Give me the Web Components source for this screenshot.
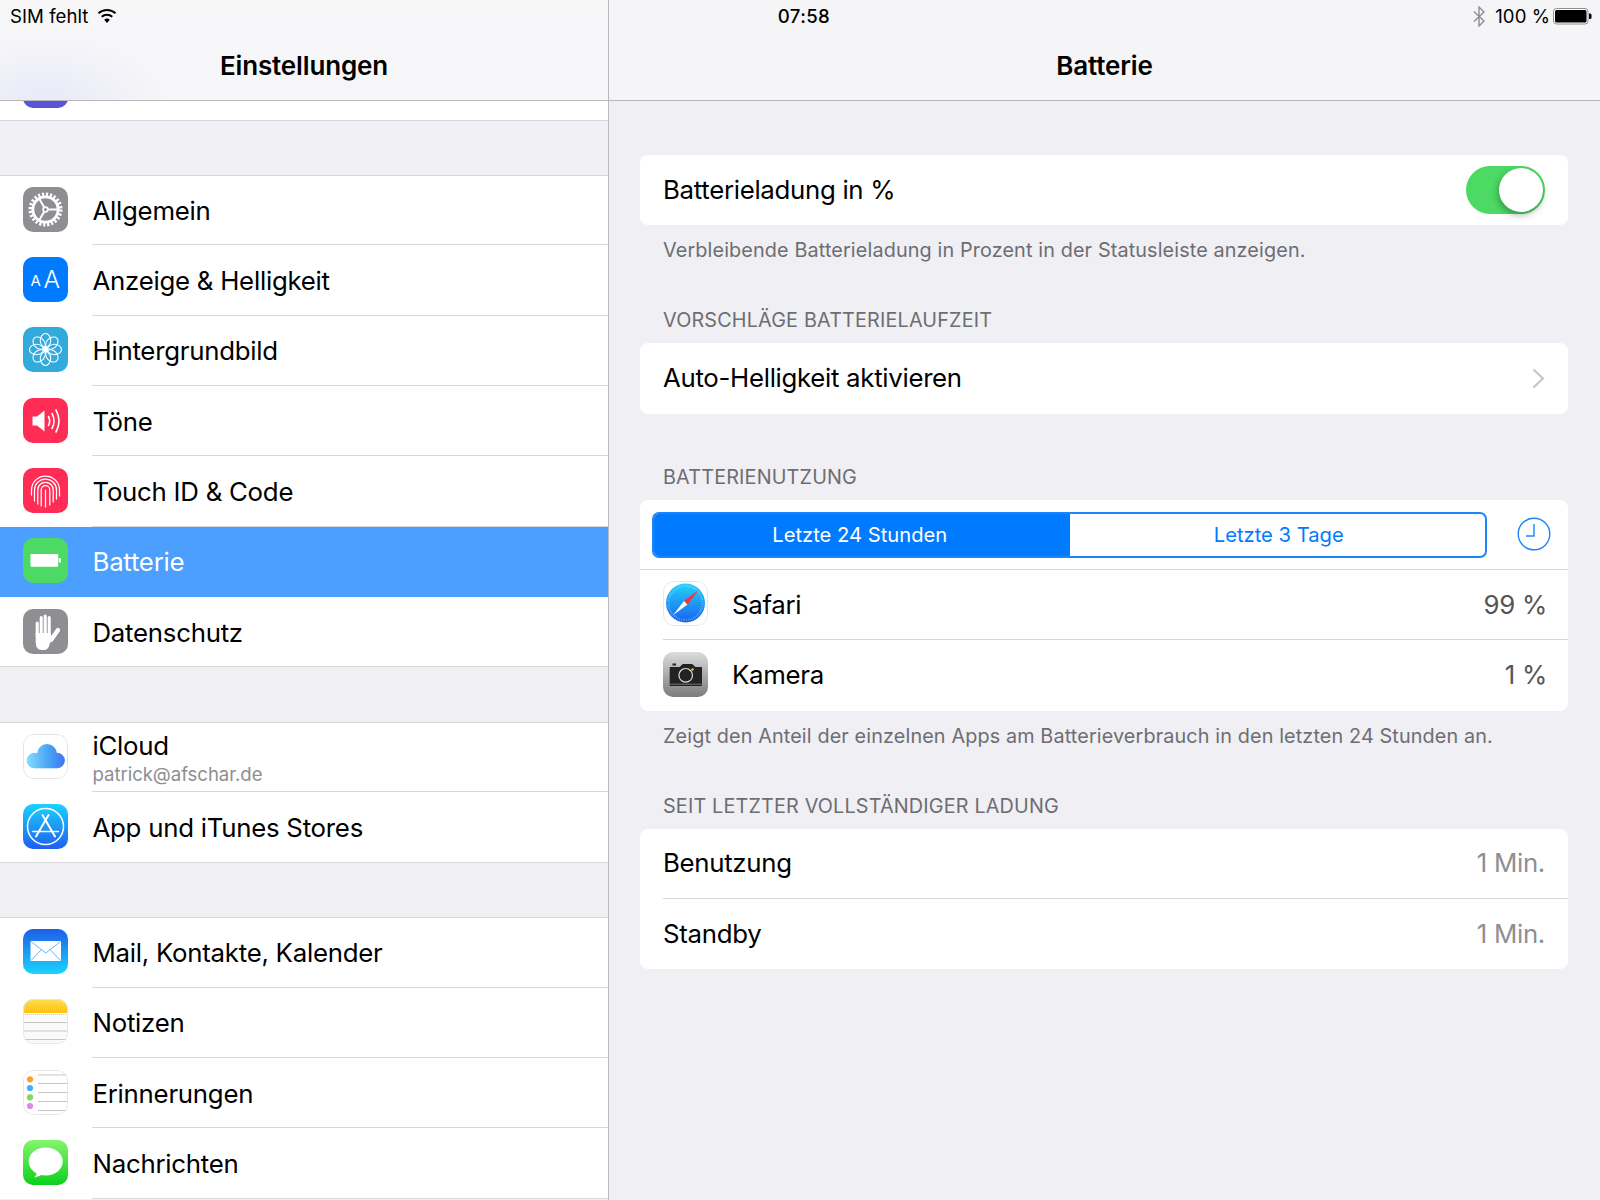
<!doctype html>
<html lang="de">
<head>
<meta charset="utf-8">
<title>Einstellungen</title>
<style>
	html, body { margin: 0; background: #efeff4; }
	body { font-family: Inter, "Liberation Sans", sans-serif; }
	[slot="value"] { white-space: nowrap; }
</style>
</head>
<body>
<settings-app>
	<status-bar></status-bar>

	<split-pane slot="master">
		<nav-bar slot="nav" title="Einstellungen" tint></nav-bar>
		<settings-list>
			<settings-group clipped>
				<settings-row last><app-icon slot="icon" name="moon"></app-icon></settings-row>
			</settings-group>
			<settings-group>
				<settings-row label="Allgemein"><app-icon slot="icon" name="gear"></app-icon></settings-row>
				<settings-row label="Anzeige &amp; Helligkeit"><app-icon slot="icon" name="display"></app-icon></settings-row>
				<settings-row label="Hintergrundbild"><app-icon slot="icon" name="flower"></app-icon></settings-row>
				<settings-row label="Töne"><app-icon slot="icon" name="sound"></app-icon></settings-row>
				<settings-row label="Touch ID &amp; Code"><app-icon slot="icon" name="touch"></app-icon></settings-row>
				<settings-row label="Batterie" selected><app-icon slot="icon" name="battery"></app-icon></settings-row>
				<settings-row label="Datenschutz" last><app-icon slot="icon" name="hand"></app-icon></settings-row>
			</settings-group>
			<settings-group>
				<settings-row label="iCloud" sub="patrick@afschar.de"><app-icon slot="icon" name="icloud"></app-icon></settings-row>
				<settings-row label="App und iTunes Stores" last><app-icon slot="icon" name="appstore"></app-icon></settings-row>
			</settings-group>
			<settings-group>
				<settings-row label="Mail, Kontakte, Kalender"><app-icon slot="icon" name="mail"></app-icon></settings-row>
				<settings-row label="Notizen"><app-icon slot="icon" name="notes"></app-icon></settings-row>
				<settings-row label="Erinnerungen"><app-icon slot="icon" name="reminders"></app-icon></settings-row>
				<settings-row label="Nachrichten"><app-icon slot="icon" name="messages"></app-icon></settings-row>
			</settings-group>
		</settings-list>
	</split-pane>

	<split-pane slot="detail">
		<nav-bar slot="nav" title="Batterie"></nav-bar>
		<detail-body>
			<table-section footer="Verbleibende Batterieladung in Prozent in der Statusleiste anzeigen.">
				<table-cell label="Batterieladung in %" last><ios-switch slot="value"></ios-switch></table-cell>
			</table-section>
			<table-section header="VORSCHLÄGE BATTERIELAUFZEIT">
				<table-cell label="Auto-Helligkeit aktivieren" chevron last></table-cell>
			</table-section>
			<table-section style="margin-top:52px" header="BATTERIENUTZUNG" footer="Zeigt den Anteil der einzelnen Apps am Batterieverbrauch in den letzten 24 Stunden an.">
				<usage-filter></usage-filter>
				<table-cell label="Safari" tone="dark">
					<app-icon slot="icon" name="safari"></app-icon>
					<span slot="value">99 %</span>
				</table-cell>
				<table-cell label="Kamera" tone="dark" last>
					<app-icon slot="icon" name="camera"></app-icon>
					<span slot="value">1 %</span>
				</table-cell>
			</table-section>
			<table-section header="SEIT LETZTER VOLLSTÄNDIGER LADUNG">
				<table-cell label="Benutzung"><span slot="value">1 Min.</span></table-cell>
				<table-cell label="Standby" last><span slot="value">1 Min.</span></table-cell>
			</table-section>
		</detail-body>
	</split-pane>
</settings-app>

<script>
// Shared line colours
const LINE = "#d8d8dc";
const EDGE = "#b9b9bc";

// Icon artwork, all on a 45x45 box
const ICONS = {
	moon: `<rect width="45" height="45" fill="#5856d6"/>`,
	gear: `<rect width="45" height="45" fill="#8e8e93"/>
		<g fill="none" stroke="#fff">
			<circle cx="22.5" cy="22.5" r="15.2" stroke-width="3.6" stroke-dasharray="2.2 1.78"/>
			<circle cx="22.5" cy="22.5" r="12.6" stroke-width="2.8"/>
			<path d="M22.5 22.5H35M22.5 22.5L16.2 11.7M22.5 22.5L16.2 33.3" stroke-width="2"/>
			<circle cx="22.5" cy="22.5" r="2.4" fill="#8e8e93" stroke-width="1.6"/>
		</g>`,
	display: `<rect width="45" height="45" fill="#007aff"/>
		<text x="7.5" y="29" font-family="Inter, sans-serif" font-size="15" fill="#fff">A</text>
		<text x="20.5" y="31" font-family="Inter, sans-serif" font-size="24.5" font-weight="300" fill="#fff">A</text>`,
	flower: `<rect width="45" height="45" fill="#34aadc"/>
		<g fill="none" stroke="#fff" stroke-width="1.1">
			${[0, 45, 90, 135, 180, 225, 270, 315].map((a) => `<ellipse cx="22.5" cy="13.5" rx="5.2" ry="7" transform="rotate(${a} 22.5 22.5)"/>`).join("")}
		</g>
		<circle cx="22.5" cy="22.5" r="2.6" fill="#fff"/>`,
	sound: `<rect width="45" height="45" fill="#ff2d55"/>
		<path d="M9.5 18.5h4.5l7.5-6v21l-7.5-6H9.5z" fill="#fff"/>
		<g fill="none" stroke="#fff" stroke-width="1.6" stroke-linecap="round">
			<path d="M25.5 18.5q2.4 4.5 0 9"/>
			<path d="M29 15.5q4 7.5 0 15"/>
			<path d="M33 12q6 11 0 22"/>
		</g>`,
	touch: `<rect width="45" height="45" fill="#ff2d55"/>
		<g fill="none" stroke="#fff" stroke-width="1.25" stroke-linecap="round">
			<path d="M8.5 27v-5a14 14 0 0 1 28 0v6"/>
			<path d="M11.5 33v-11a11 11 0 0 1 22 0v9"/>
			<path d="M14.8 36v-14a7.7 7.7 0 0 1 15.4 0v12"/>
			<path d="M18.2 38v-16a4.3 4.3 0 0 1 8.6 0v15"/>
			<path d="M22.5 22v17"/>
		</g>`,
	battery: `<rect width="45" height="45" fill="#4cd964"/>
		<rect x="7.5" y="16" width="27.7" height="12.7" rx="1" fill="#fff"/>
		<path d="M35.8 20h1a1.2 1.2 0 0 1 1.2 1.2v2.2a1.2 1.2 0 0 1-1.2 1.2h-1z" fill="#fff"/>`,
	hand: `<rect width="45" height="45" fill="#8e8e93"/>
		<g stroke="#fff" stroke-linecap="round" fill="none">
			<path d="M14.2 14v13M18.2 8.500v17M22.200 7v18M26.200 8.500v17" stroke-width="3.100"/>
			<path d="M28 31l7-10" stroke-width="4.400"/>
		</g>
		<path d="M12.700 24h15.200v7l-2 6.500q-1.500 3.500-5 3.500h-2q-4 0-5.500-3.500l-.7-4z" fill="#fff"/>`,
	icloud: `<defs><linearGradient id="c" gradientUnits="userSpaceOnUse" x1="4" y1="0" x2="42" y2="0">
			<stop offset="0" stop-color="#86dcfb"/><stop offset=".55" stop-color="#4aa6f5"/><stop offset="1" stop-color="#3f74ee"/>
		</linearGradient></defs>
		<rect width="45" height="45" fill="#fff"/>
		<g fill="url(#c)">
			<circle cx="11.500" cy="26.500" r="7.800"/>
			<circle cx="24" cy="20" r="10"/>
			<circle cx="34" cy="26.500" r="7.800"/>
			<rect x="11.500" y="24" width="22.500" height="10.300"/>
		</g>
		<rect x=".5" y=".5" width="44" height="44" rx="10" fill="none" stroke="#e4e4e6"/>`,
	appstore: `<defs><linearGradient id="a" x1="0" y1="0" x2="0" y2="1">
			<stop offset="0" stop-color="#1ad2fc"/><stop offset="1" stop-color="#1d5ff0"/>
		</linearGradient></defs>
		<rect width="45" height="45" fill="url(#a)"/>
		<circle cx="22.500" cy="22.500" r="18" fill="none" stroke="#fff" stroke-width="1.500"/>
		<g stroke="#fff" stroke-width="2" stroke-linecap="round">
			<path d="M13 32.500L25.500 11M32 32.500L19.500 11"/>
			<path d="M9.500 27.500h26" stroke-width="1.500"/>
		</g>`,
	mail: `<defs><linearGradient id="m" x1="0" y1="0" x2="0" y2="1">
			<stop offset="0" stop-color="#1e5ee8"/><stop offset="1" stop-color="#1ad4ff"/>
		</linearGradient></defs>
		<rect width="45" height="45" fill="url(#m)"/>
		<rect x="7.500" y="12" width="30.500" height="20" fill="#fff"/>
		<path d="M8 12.500l14.800 11.500L37.500 12.500M8 31.500l10.500-11M37.500 31.500L27 20.500" fill="none" stroke="#6fb4f5" stroke-width="1"/>`,
	notes: `<defs><linearGradient id="n" x1="0" y1="0" x2="0" y2="1">
			<stop offset="0" stop-color="#ffdd4f"/><stop offset="1" stop-color="#fec30a"/>
		</linearGradient></defs>
		<rect width="45" height="45" fill="#fafafa"/>
		<rect width="45" height="14" fill="url(#n)"/>
		<path d="M0 15.500h45" stroke="#c9c9c9" stroke-width="1" stroke-dasharray="1 1"/>
		<path d="M0 23.500h45M0 32h45M0 40.500h45" stroke="#c6c6c8" stroke-width="1"/>
		<rect x=".5" y=".5" width="44" height="44" rx="10" fill="none" stroke="#e6e6e8"/>`,
	reminders: `<rect width="45" height="45" fill="#fff"/>
		<path d="M15 5h30M15 13.500h30M15 22.500h30M15 31.500h30M15 40.500h30" stroke="#c4c4c6" stroke-width="1"/>
		<circle cx="7" cy="9.300" r="3.100" fill="#ff9f2e"/>
		<circle cx="7" cy="18" r="3.100" fill="#3ab3fb"/>
		<circle cx="7" cy="27.300" r="3.100" fill="#7ed957"/>
		<circle cx="7" cy="36" r="3.100" fill="#d98be5"/>
		<rect x=".5" y=".5" width="44" height="44" rx="10" fill="none" stroke="#e6e6e8"/>`,
	messages: `<defs><linearGradient id="s" x1="0" y1="0" x2="0" y2="1">
			<stop offset="0" stop-color="#86f56c"/><stop offset="1" stop-color="#0cd01d"/>
		</linearGradient></defs>
		<rect width="45" height="45" fill="url(#s)"/>
		<ellipse cx="22.700" cy="21.500" rx="17" ry="14" fill="#fff"/>
		<path d="M14 31q-.3 4.500-2.800 6.500q5-.3 8.300-3.500z" fill="#fff"/>`,
	safari: `<defs><linearGradient id="f" x1="0" y1="0" x2="0" y2="1">
			<stop offset="0" stop-color="#22d2fb"/><stop offset="1" stop-color="#1b62ef"/>
		</linearGradient></defs>
		<rect width="45" height="45" fill="#fff"/>
		<circle cx="22.500" cy="22" r="19.500" fill="url(#f)"/>
		<circle cx="22.500" cy="22" r="17" fill="none" stroke="#fff" stroke-opacity=".6" stroke-width="2" stroke-dasharray=".4 1.400"/>
		<path d="M35.700 9L24.400 23.400 21 20z" fill="#ff2d37"/>
		<path d="M10 34.300L21 20l3.400 3.400z" fill="#fff"/>
		<rect x=".5" y=".5" width="44" height="44" rx="10" fill="none" stroke="#e6e6e8"/>`,
	camera: `<defs><linearGradient id="k" x1="0" y1="0" x2="0" y2="1">
			<stop offset="0" stop-color="#dcdcdc"/><stop offset="1" stop-color="#7c7c7c"/>
		</linearGradient></defs>
		<rect width="45" height="45" fill="url(#k)"/>
		<path d="M6.700 15h10l2.500-2.600a1.500 1.500 0 0 1 1-.4h8.600a1.500 1.500 0 0 1 1 .4l2.500 2.600h6.700v19H6.700z" fill="#222"/>
		<rect x="9.500" y="11.500" width="3.500" height="2" fill="#222"/>
		<path d="M6.700 32.200h32.300" stroke="#8a8a8a" stroke-width=".8"/>
		<circle cx="22.700" cy="23.300" r="6.800" fill="none" stroke="#ddd" stroke-width="1.200"/>
		<circle cx="29.500" cy="17.500" r="1.200" fill="#f5c842"/>`,
};

class AppIcon extends HTMLElement {
	connectedCallback() {
		const name = this.getAttribute("name");
		this.attachShadow({ mode: "open" }).innerHTML = `
			<style>
				:host { display: block; width: 45px; height: 45px; border-radius: 10px; overflow: hidden; }
				svg { display: block; }
			</style>
			<svg width="45" height="45" viewBox="0 0 45 45">${ICONS[name] || ""}</svg>`;
	}
}

class SettingsApp extends HTMLElement {
	constructor() {
		super();
		this.attachShadow({ mode: "open" }).innerHTML = `
			<style>
				:host { display: grid; grid-template-columns: 609px 1fr; position: relative; width: 1600px; height: 1200px; overflow: hidden; background: #efeff4; color: #000; }
				::slotted([slot="master"]) { border-right: 1px solid ${EDGE}; }
			</style>
			<slot></slot>
			<slot name="master"></slot>
			<slot name="detail"></slot>`;
	}
}

// Lies over both nav bars
class StatusBar extends HTMLElement {
	constructor() {
		super();
		this.attachShadow({ mode: "open" }).innerHTML = `
			<style>
				:host { position: absolute; z-index: 2; top: 0; left: 0; right: 0; height: 32px; display: grid; grid-template-columns: 1fr auto 1fr; align-items: center; padding: 0 8px 0 10px; box-sizing: border-box; font-size: 18.6px; letter-spacing: .05px; }
				.side { display: flex; align-items: center; }
				.right { justify-content: flex-end; }
				.time { font-weight: 500; margin-left: 6px; letter-spacing: .4px; }
				svg { display: block; }
			</style>
			<div class="side">
				<span>SIM fehlt</span>
				<svg style="margin-left:8.5px" width="20" height="16" viewBox="0 0 20 16">
					<path d="M10 15L7.200 11.700a4.300 4.300 0 0 1 5.600 0z" fill="#000"/>
					<g fill="none" stroke="#000" stroke-width="2">
						<path d="M4.700 8.700a8 8 0 0 1 10.600 0"/>
						<path d="M1.500 5.200a12.700 12.700 0 0 1 17 0"/>
					</g>
				</svg>
			</div>
			<div class="time">07:58</div>
			<div class="side right">
				<svg width="14" height="21" viewBox="0 0 14 21"><path d="M2 5.500l10 9.500-5 5V1l5 5-10 9.500" fill="none" stroke="#8e8e93" stroke-width="1.400"/></svg>
				<span style="margin-left:9px">100 %</span>
				<svg style="margin-left:3px" width="39" height="17" viewBox="0 0 39 17">
					<rect x=".5" y=".5" width="34.500" height="15.500" rx="3" fill="#fff" stroke="#8e8e93"/>
					<rect x="2" y="2" width="31.500" height="12.500" rx="1.500" fill="#000"/>
					<path d="M36 5.500h1a1.500 1.500 0 0 1 1.500 1.500v2.500A1.500 1.500 0 0 1 37 11h-1z" fill="#000"/>
				</svg>
			</div>`;
	}
}

class SplitPane extends HTMLElement {
	constructor() {
		super();
		this.attachShadow({ mode: "open" }).innerHTML = `
			<style>
				:host { display: flex; flex-direction: column; height: 1200px; overflow: hidden; min-width: 0; }
				.nav { position: relative; z-index: 1; flex: none; }
			</style>
			<div class="nav"><slot name="nav"></slot></div>
			<slot></slot>`;
	}
}

class NavBar extends HTMLElement {
	connectedCallback() {
		const tint = this.hasAttribute("tint");
		this.attachShadow({ mode: "open" }).innerHTML = `
			<style>
				:host { display: block; height: 101px; box-sizing: border-box; border-bottom: 1px solid ${EDGE};
					background: ${tint ? "radial-gradient(120px 65px at 45px 100px, #e9e9f9, rgba(233,233,249,0) 100%), linear-gradient(#f7f7f8, #f6f6f8)" : "#f5f5f7"}; }
				h1 { margin: 0; padding-top: 48px; line-height: 36px; text-align: center; font-size: 26px; font-weight: 600; letter-spacing: -.15px; }
			</style>
			<h1>${this.getAttribute("title")}</h1>`;
		this.removeAttribute("title");
	}
}

class SettingsList extends HTMLElement {
	constructor() {
		super();
		this.attachShadow({ mode: "open" }).innerHTML = `
			<style>
				:host { display: flex; flex-direction: column; gap: 54.67px; margin-top: -51px; }
			</style>
			<slot></slot>`;
	}
}

class SettingsGroup extends HTMLElement {
	constructor() {
		super();
		this.attachShadow({ mode: "open" }).innerHTML = `
			<style>
				:host { display: block; background: #fff; box-shadow: inset 0 1px 0 ${LINE}; }
				:host([clipped]) { box-shadow: none; margin-top: 1px; margin-bottom: -1px; }
			</style>
			<slot></slot>`;
	}
}

class SettingsRow extends HTMLElement {
	connectedCallback() {
		const label = this.getAttribute("label") || "";
		const sub = this.getAttribute("sub");
		this.attachShadow({ mode: "open" }).innerHTML = `
			<style>
				:host { display: flex; box-sizing: border-box; height: 70.33px; padding-left: 23px; align-items: stretch; font-size: 25.8px; letter-spacing: -.25px; }
				:host([selected]) { background: #4c9eff; color: #fff; }
				.icon { align-self: center; flex: none; width: 46px; margin-bottom: 2px; }
				.body { flex: 1; margin-left: 23px; padding-top: 2px; display: flex; flex-direction: column; justify-content: center; border-bottom: 1px solid ${LINE}; }
				:host([last]) .body { margin-left: 0; padding-left: 23px; border-bottom: 0; }
				:host([last]) { box-shadow: inset 0 -1px 0 ${LINE}; }
				:host([selected]) .body { border-bottom-color: transparent; }
				.label { line-height: 34px; padding-left: .5px; }
				.sub { font-size: 18.6px; line-height: 23px; color: #8e8e93; letter-spacing: -.05px; padding-left: .5px; }
			</style>
			<div class="icon"><slot name="icon"></slot></div>
			<div class="body">
				<div class="label">${label}</div>
				${sub ? `<div class="sub">${sub}</div>` : ""}
			</div>`;
	}
}

class DetailBody extends HTMLElement {
	constructor() {
		super();
		this.attachShadow({ mode: "open" }).innerHTML = `
			<style>
				:host { display: flex; flex-direction: column; padding: 54px 32px 0 31px; }
			</style>
			<slot></slot>`;
	}
}

class TableSection extends HTMLElement {
	connectedCallback() {
		const header = this.getAttribute("header");
		const footer = this.getAttribute("footer");
		this.attachShadow({ mode: "open" }).innerHTML = `
			<style>
				:host { display: block; margin-top: 48px; }
				:host(:first-child) { margin-top: 0; }
				.head, .foot { padding-left: 23px; color: #6d6d72; line-height: 22px; font-size: 19.8px; white-space: nowrap; }
				.head { padding-bottom: 12px; letter-spacing: .17px; }
				.foot { padding-top: 14px; letter-spacing: .135px; }
				.card { background: #fff; border-radius: 8px; overflow: hidden; }
			</style>
			${header ? `<div class="head">${header}</div>` : ""}
			<div class="card"><slot></slot></div>
			${footer ? `<div class="foot">${footer}</div>` : ""}`;
	}
}

class TableCell extends HTMLElement {
	connectedCallback() {
		const chevron = this.hasAttribute("chevron");
		this.attachShadow({ mode: "open" }).innerHTML = `
			<style>
				:host { display: flex; box-sizing: border-box; height: 70.33px; margin-left: 23px; align-items: center; border-bottom: 1px solid ${LINE}; padding-right: 23px; font-size: 25.8px; letter-spacing: -.3px; }
				:host([last]) { border-bottom: 0; }
				:host([tone="dark"]) { padding-right: 21px; }
				.icon { flex: none; margin-bottom: 2px; }
				::slotted([slot="icon"]) { margin-right: 24px; }
				.label { flex: 1; padding-bottom: 1px; }
				.value { color: #8e8e93; padding-bottom: 1px; }
				:host([tone="dark"]) .value { color: #555; }
				svg { display: block; }
			</style>
			<div class="icon"><slot name="icon"></slot></div>
			<div class="label">${this.getAttribute("label") || ""}</div>
			<div class="value"><slot name="value"></slot></div>
			${chevron ? `<svg width="13" height="21" viewBox="0 0 13 21"><path d="M1.500 1.500l9.500 9-9.500 9" fill="none" stroke="#c7c7cc" stroke-width="2.200"/></svg>` : ""}`;
	}
}

class IosSwitch extends HTMLElement {
	constructor() {
		super();
		this.attachShadow({ mode: "open" }).innerHTML = `
			<style>
				:host { display: flex; justify-content: flex-end; width: 79px; height: 48px; padding: 2px; box-sizing: border-box; border-radius: 24px; background: #4cd964; }
				i { display: block; width: 44px; height: 44px; border-radius: 50%; background: #fff; box-shadow: -1px 3px 7px rgba(0,0,0,.32); }
			</style>
			<i></i>`;
	}
}

class UsageFilter extends HTMLElement {
	constructor() {
		super();
		this.attachShadow({ mode: "open" }).innerHTML = `
			<style>
				:host { display: flex; box-sizing: border-box; height: 70.33px; padding: 12px 17px 0 12px; align-items: flex-start; border-bottom: 1px solid ${LINE}; }
				.seg { flex: none; display: flex; width: 835px; height: 46px; box-sizing: border-box; border: 2px solid #1a86fb; border-radius: 7px; overflow: hidden; font-size: 20.2px; line-height: 42px; text-align: center; color: #007aff; }
				.seg div { flex: none; width: 50%; box-sizing: border-box; }
				.seg .on { background: #007aff; color: #fff; padding-right: 4px; }
				.seg .off { padding-left: 3px; }
				svg { display: block; margin-left: auto; margin-top: 5px; }
			</style>
			<div class="seg">
				<div class="on">Letzte 24 Stunden</div>
				<div class="off">Letzte 3 Tage</div>
			</div>
			<svg width="34" height="34" viewBox="0 0 34 34" fill="none" stroke="#1a86fb" stroke-width="1.400">
				<circle cx="17" cy="17" r="15.800"/>
				<path d="M17 7v12H9"/>
			</svg>`;
	}
}

customElements.define("app-icon", AppIcon);
customElements.define("settings-app", SettingsApp);
customElements.define("status-bar", StatusBar);
customElements.define("split-pane", SplitPane);
customElements.define("nav-bar", NavBar);
customElements.define("settings-list", SettingsList);
customElements.define("settings-group", SettingsGroup);
customElements.define("settings-row", SettingsRow);
customElements.define("detail-body", DetailBody);
customElements.define("table-section", TableSection);
customElements.define("table-cell", TableCell);
customElements.define("ios-switch", IosSwitch);
customElements.define("usage-filter", UsageFilter);
</script>
</body>
</html>
